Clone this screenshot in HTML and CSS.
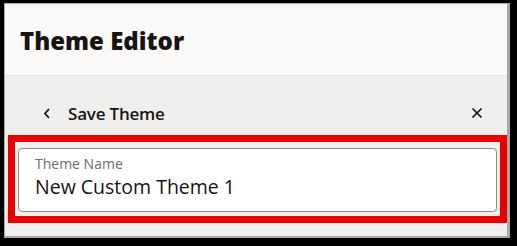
FILE: index.html
```html
<!DOCTYPE html>
<html>
<head>
<meta charset="utf-8">
<link rel="stylesheet" href="styles.css">
</head>
<body>
<div class="panel">
  <header class="header">
    <h1 class="title">Theme Editor</h1>
  </header>
  <div class="body">
    <div class="subbar">
      <span class="back"><svg width="8" height="11" viewBox="0 0 8 11"><path d="M6 1 L2 5.5 L6 10" fill="none" stroke="#161513" stroke-width="1.8"/></svg></span>
      <span class="subtitle">Save Theme</span>
      <span class="close"><svg width="12" height="12" viewBox="0 0 12 12"><path d="M1.5 1.5 L10.5 10.5 M10.5 1.5 L1.5 10.5" fill="none" stroke="#161513" stroke-width="1.7"/></svg></span>
    </div>
    <div class="highlight">
      <div class="field">
        <div class="label">Theme Name</div>
        <div class="value">New Custom Theme 1</div>
      </div>
    </div>
  </div>
</div>
</body>
</html>
```
FILE: styles.css
```css
html, body {
  margin: 0;
  padding: 0;
}
body {
  width: 517px;
  height: 246px;
  background: #000;
  padding: 3px 0 0 4px;
  box-sizing: border-box;
  font-family: "Open Sans", "Noto Sans", sans-serif;
  color: #161513;
}
.panel {
  width: 506px;
  height: 235px;
  box-sizing: border-box;
  border-left: 1px solid #a9a6a3;
  border-top: 1px solid #a9a6a3;
  border-right: 3px solid #a9a6a3;
  border-bottom: 2px solid #a9a6a3;
  display: flex;
  flex-direction: column;
  background: #f1efed;
}
.header {
  height: 71px;
  background: #fbfaf9;
  border-bottom: 1px solid #e4e1de;
  display: flex;
  align-items: center;
  padding-left: 15px;
  box-sizing: content-box;
}
.title {
  margin: 0;
  font-size: 24px;
  font-weight: 800;
  letter-spacing: 0;
  padding-top: 2px;
}
.body {
  flex: 1;
  display: flex;
  flex-direction: column;
}
.subbar {
  height: 59px;
  box-sizing: border-box;
  display: flex;
  align-items: center;
  padding: 15px 24px 0 38px;
}
.back {
  display: flex;
  width: 25px;
}
.subtitle {
  font-size: 17px;
  font-weight: 600;
  flex: 1;
  letter-spacing: -0.2px;
}
.close {
  display: flex;
}
.highlight {
  margin-left: 3px;
  border: 7px solid #e80000;
  padding: 6px 3px 4px 3px;
}
.field {
  height: 64px;
  box-sizing: border-box;
  background: #fff;
  border: 1px solid #8e8b88;
  border-radius: 4px;
  padding: 5px 16px 0 16px;
}
.label {
  font-size: 14px;
  color: #6f6c69;
  line-height: 19px;
}
.value {
  font-size: 19.5px;
  line-height: 27px;
  color: #161513;
}
```
